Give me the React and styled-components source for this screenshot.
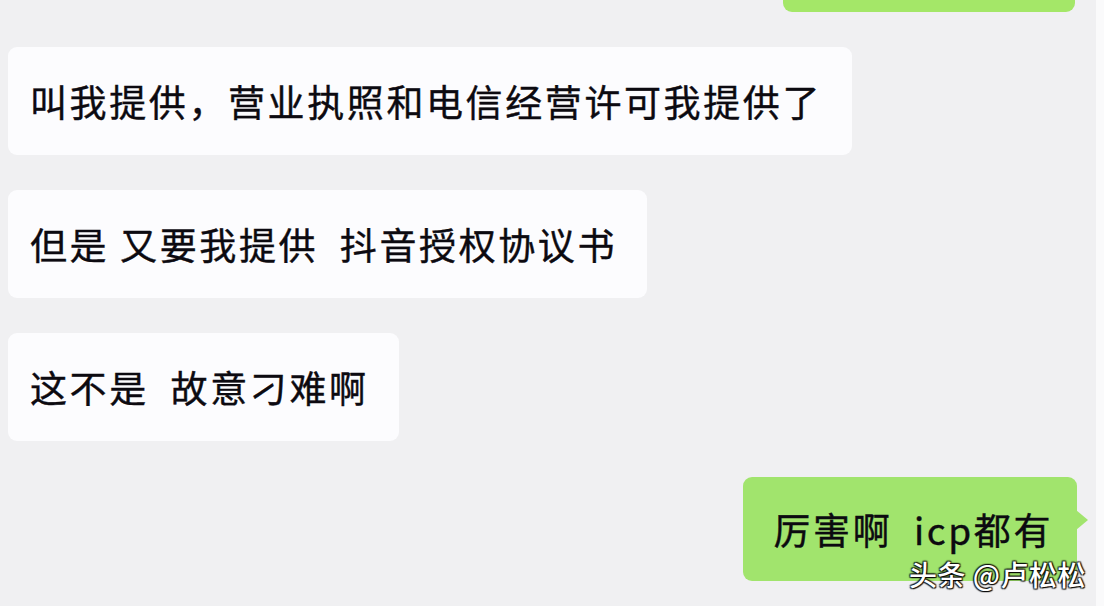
import React from 'react'
import { styled, createGlobalStyle } from 'styled-components'

const GlobalStyle = createGlobalStyle`
    html, body {
        margin: 0;
        padding: 0;
        background: #fafafb;
    }
    body {
        font-family: "Noto Sans CJK SC", "Noto Sans", sans-serif;
    }
`;

const messages = [
    { id: 1, side: 'left', text: '叫我提供，营业执照和电信经营许可我提供了' },
    { id: 2, side: 'left', text: '但是 又要我提供  抖音授权协议书' },
    { id: 3, side: 'left', text: '这不是  故意刁难啊' },
    { id: 4, side: 'right', text: '厉害啊  icp都有', tail: true },
]

function App() {
    return (
        <>
            <GlobalStyle />
            <PageStyled>
                <ChatList>
                    <Row $side="right">
                        <Bubble $side="right" $cut />
                    </Row>
                    {messages.map(({ id, side, text, tail }) => (
                        <Row key={id} $side={side}>
                            <Bubble $side={side} $tail={tail}>{text}</Bubble>
                        </Row>
                    ))}
                </ChatList>
                <Watermark>头条 @卢松松</Watermark>
            </PageStyled>
        </>
    )
}

const PageStyled = styled.div`
    position: relative;
    width: 1104px;
    height: 606px;
    overflow: hidden;
    display: flex;
`;

const ChatList = styled.div`
    width: 1096px;
    background: #f0f0f2;
    display: flex;
    flex-direction: column;
    gap: 35px;
    padding: 0 19px 0 8px;
    box-sizing: border-box;
`;

const Row = styled.div`
    display: flex;
    justify-content: ${({ $side }) => ($side === 'right' ? 'flex-end' : 'flex-start')};
`;

const Bubble = styled.div`
    position: relative;
    box-sizing: border-box;
    padding: ${({ $side }) => ($side === 'right' ? '30px 28px 30px 30px' : '30px 30px 30px 22px')};
    min-height: 108px;
    border-radius: 9px;
    background: ${({ $side }) => ($side === 'right' ? '#a1e46d' : '#fcfcfe')};
    color: #0c0a10;
    font-size: 37px;
    line-height: 48px;
    letter-spacing: 2.6px;
    white-space: pre;
    -webkit-text-stroke: 0.4px #0c0a10;
    ${({ $cut }) => $cut && `
        width: 292px;
        margin-top: -96px;
        margin-right: 2px;
        background: #a4e768;
    `}
    ${({ $tail }) => $tail && `
        margin-top: 1px;
        min-height: 104px;
        padding: 28px 24px 28px 30px;
    `}

    &::after {
        content: '';
        display: ${({ $tail }) => ($tail ? 'block' : 'none')};
        position: absolute;
        right: -11px;
        top: 33px;
        border-top: 10px solid transparent;
        border-bottom: 10px solid transparent;
        border-left: 12px solid #a1e46d;
    }
`;

const Watermark = styled.div`
    position: absolute;
    right: 18px;
    bottom: 12px;
    color: #ffffff;
    font-size: 28px;
    font-weight: 500;
    letter-spacing: 0.5px;
    text-shadow: 0 0 2px rgba(0, 0, 0, 0.95), 1px 1px 1px rgba(0, 0, 0, 0.9), -1px -1px 1px rgba(0, 0, 0, 0.7), 1px -1px 1px rgba(0, 0, 0, 0.7), -1px 1px 1px rgba(0, 0, 0, 0.7);
`;

export default App
